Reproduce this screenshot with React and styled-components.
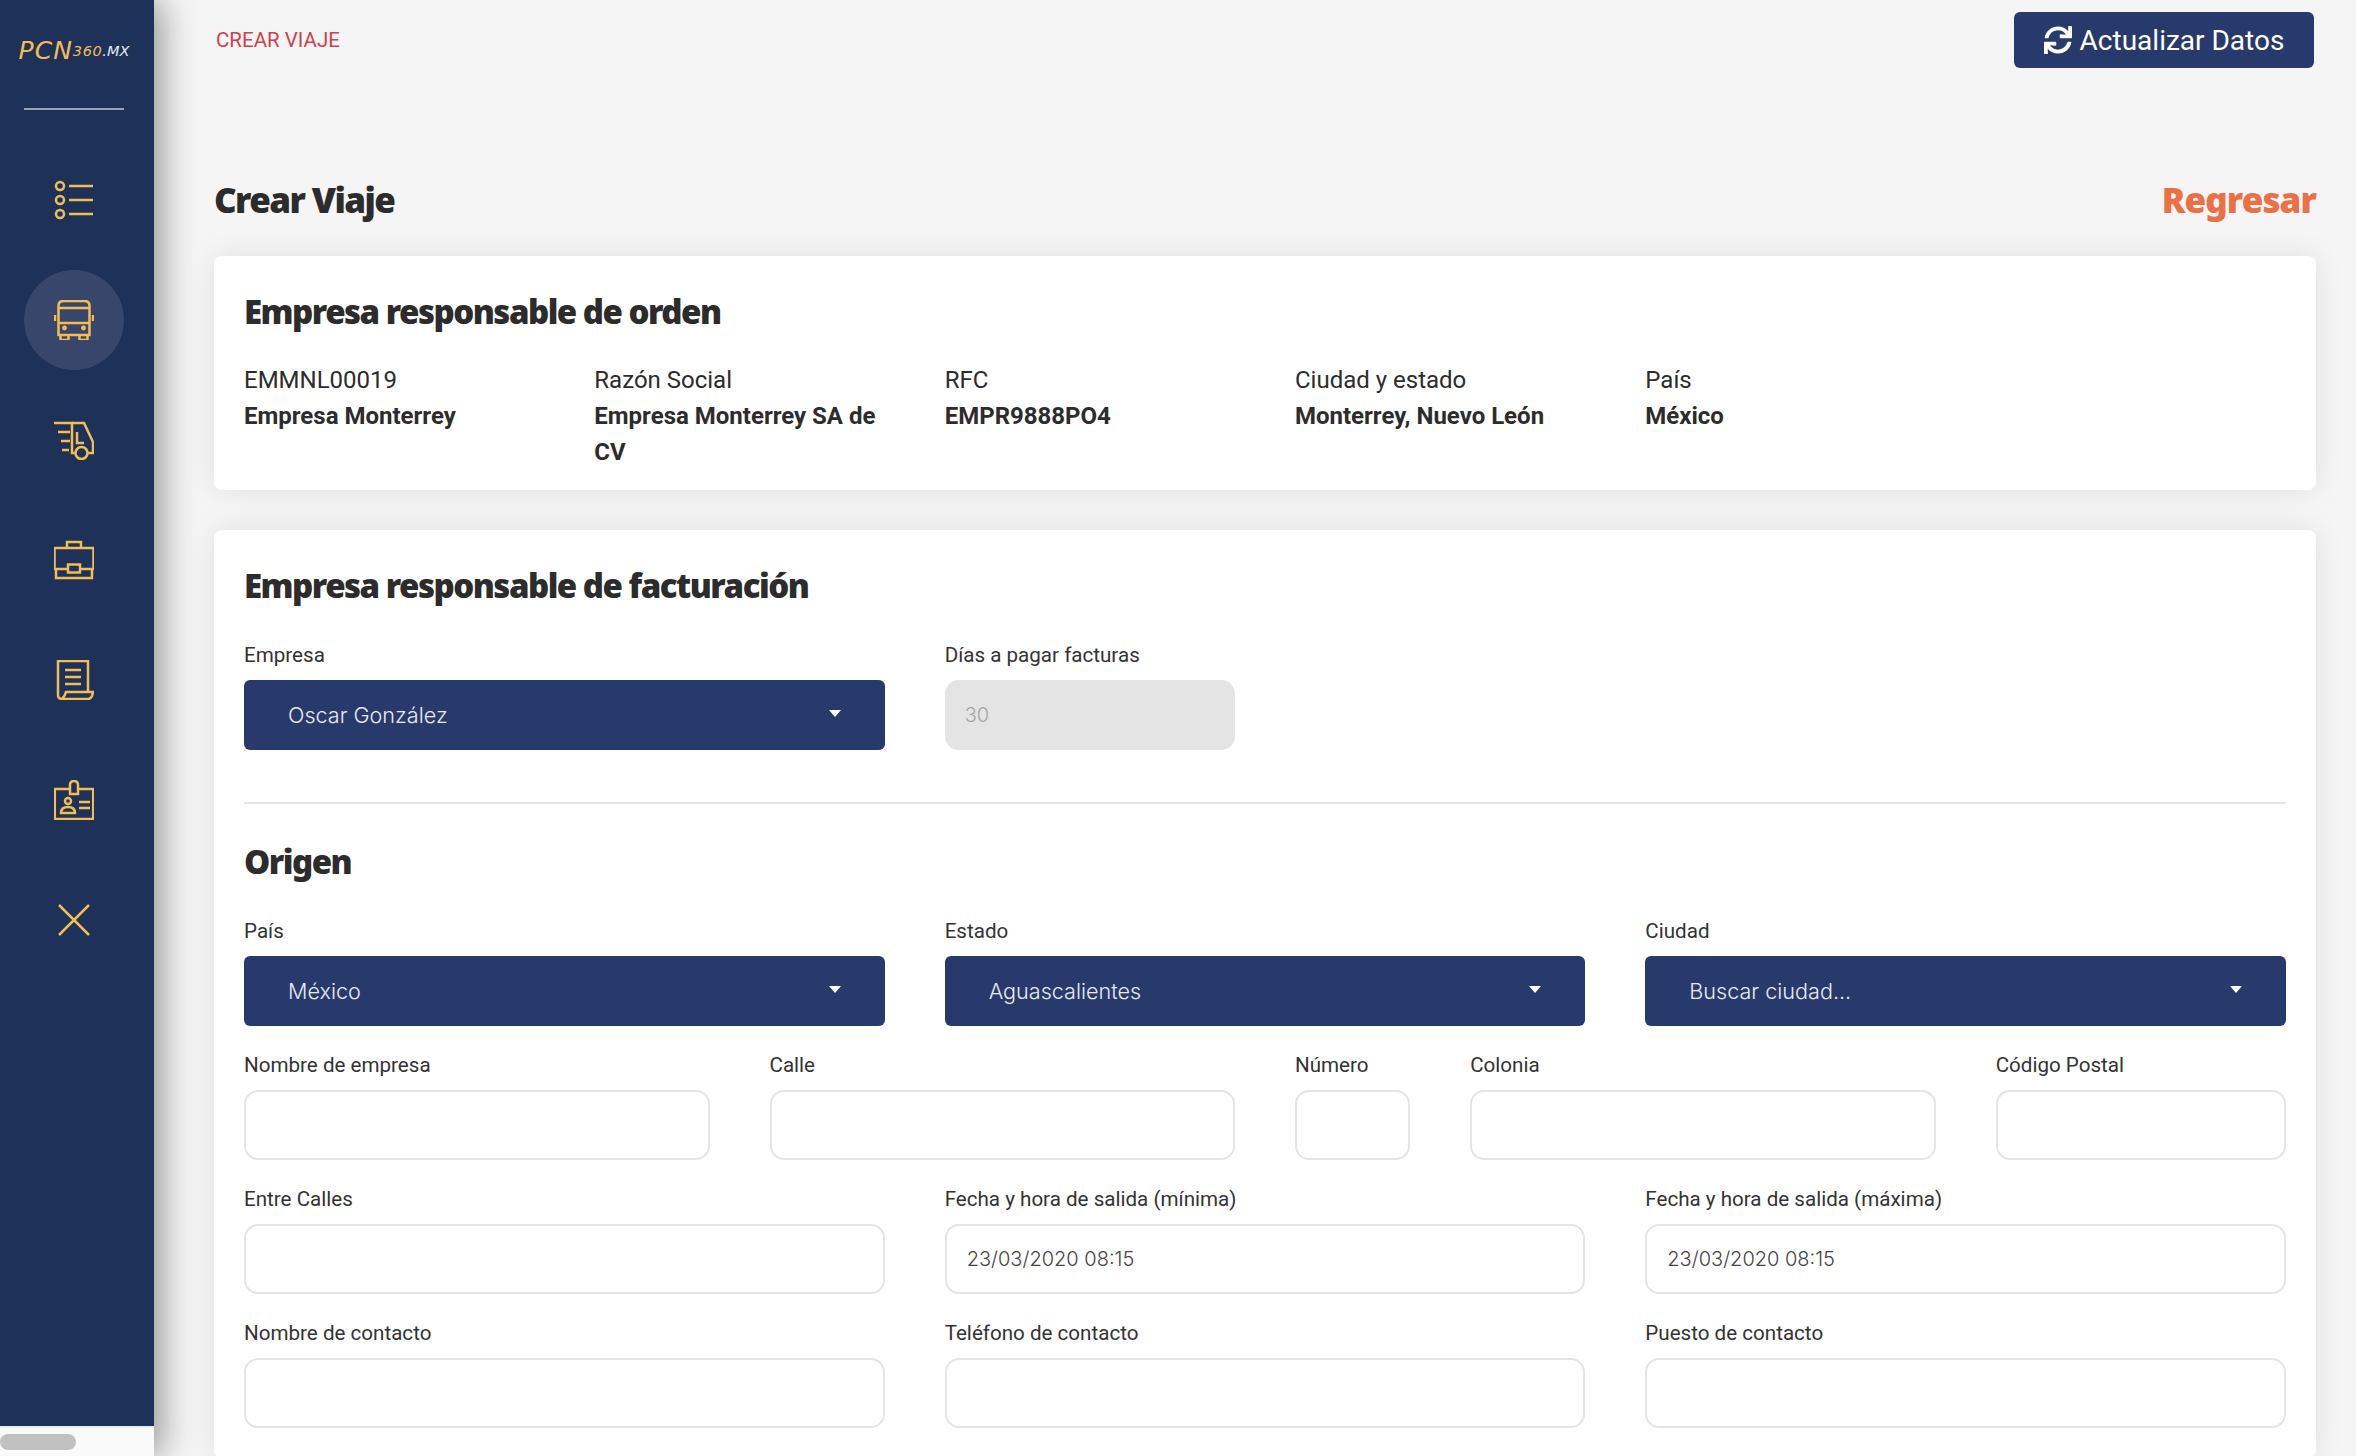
import React from "react"
import styled, { createGlobalStyle } from "styled-components"
import { FaSync } from "react-icons/fa"

const GlobalStyle = createGlobalStyle`
  html, body {
    margin: 0;
    padding: 0;
    background: #f5f5f5;
  }
  * {
    box-sizing: border-box;
  }
`

const Page = styled.div`
  display: flex;
  width: 2356px;
  height: 1456px;
  overflow: hidden;
  font-family: Roboto, "Liberation Sans", sans-serif;
  color: #2c2c2c;
`

const Sidebar = styled.aside`
  position: relative;
  z-index: 1;
  flex: 0 0 154px;
  display: flex;
  flex-direction: column;
  background: #fafafa;
  box-shadow: 6px 0 34px rgba(0, 0, 0, 0.42);
`

const SideBody = styled.div`
  flex: 1;
  padding-right: 6px;
  background: #1e3159;
  display: flex;
  flex-direction: column;
  align-items: center;
`

const Logo = styled.div`
  height: 108px;
  width: 100%;
  padding-top: 36px;
  text-align: center;
  white-space: nowrap;
  font-family: "DejaVu Sans", sans-serif;
  font-style: italic;
  color: #f2bd55;
  span {
    vertical-align: 3px;
    font-size: 14.500px;
    letter-spacing: 0.6px;
  }
  b {
    font-size: 25px;
    font-weight: 400;
    letter-spacing: 1px;
  }
  span + span {
    letter-spacing: 0;
    color: #e6e9f0;
  }
`

const SideRule = styled.div`
  width: 100px;
  height: 2px;
  background: #9aa3b8;
  flex: none;
`

const Nav = styled.nav`
  margin-top: 30px;
  width: 100%;
  display: flex;
  flex-direction: column;
  align-items: center;
`

const NavItem = styled.a`
  height: 120px;
  width: 100%;
  display: flex;
  align-items: center;
  justify-content: center;
  &::before {
    content: "";
    display: ${(p) => (p.$active ? "block" : "none")};
    position: absolute;
    width: 100px;
    height: 100px;
    border-radius: 50%;
    background: #38466b;
  }
  svg {
    position: relative;
    width: 40px;
    height: 40px;
    fill: none;
    stroke: #f2bd55;
    stroke-width: 2.5;
  }
`

const ScrollTrack = styled.div`
  flex: 0 0 30px;
  padding-top: 6px;
  border-top: 2px solid #eeeeee;
  background: #fafafa;
`

const ScrollThumb = styled.div`
  width: 76px;
  height: 16px;
  border-radius: 8px;
  background: #c1c1c1;
`

const Main = styled.main`
  flex: 1;
  min-width: 0;
  padding: 12px 40px 0 60px;
`

const TopBar = styled.div`
  display: flex;
  justify-content: space-between;
  align-items: center;
  height: 56px;
`

const Crumb = styled.span`
  margin-left: 2px;
  font-size: 20.5px;
  color: #d2404a;
`

const UpdateButton = styled.button`
  margin-right: 2px;
  width: 300px;
  height: 56px;
  border: 0;
  border-radius: 6px;
  background: #283a6c;
  color: #ffffff;
  font-family: inherit;
  font-size: 28px;
  display: flex;
  align-items: center;
  justify-content: center;
  gap: 8px;
  svg {
    font-size: 28px;
  }
`

const TitleRow = styled.div`
  display: flex;
  justify-content: space-between;
  align-items: center;
  height: 50px;
  margin: 106px 0 32px;
`

const PageTitle = styled.h1`
  margin: 0;
  font-family: "Noto Sans", sans-serif;
  font-size: 35px;
  font-weight: 900;
  letter-spacing: -1.6px;
  color: #2c2c2c;
`

const BackLink = styled.a`
  font-family: "Noto Sans", sans-serif;
  font-size: 35px;
  font-weight: 900;
  letter-spacing: -0.9px;
  color: #ea7045;
`

const Card = styled.section`
  background: #ffffff;
  border-radius: 8px;
  padding: 30px 30px ${(p) => p.$bottom || 30}px;
  margin-bottom: 40px;
  box-shadow: 0 0 30px rgba(0, 0, 0, 0.09);
`

const CardTitle = styled.h2`
  margin: -1px 0 ${(p) => (p.$bottom || 0) + 1}px;
  font-family: "Noto Sans", sans-serif;
  font-size: 33px;
  line-height: 54px;
  font-weight: 900;
  letter-spacing: -1.5px;
  color: #2c2c2c;
`

const Grid = styled.div`
  display: grid;
  grid-template-columns: repeat(12, 1fr);
  column-gap: 60px;
  row-gap: 26px;
`

const InfoCol = styled.div`
  grid-column: span 2;
  font-size: 24px;
  line-height: 36px;
  b {
    display: block;
    font-weight: 700;
  }
`

const Field = styled.div`
  grid-column: span ${(p) => p.$span};
`

const Label = styled.label`
  display: block;
  height: 26px;
  margin-bottom: 12px;
  font-size: 20.6px;
  line-height: 26px;
  color: #333333;
`

const Select = styled.div`
  position: relative;
  height: 70px;
  padding-left: 44px;
  border-radius: 6px;
  background: #283a6c;
  color: #e8eaf0;
  font-family: Inter, sans-serif;
  font-size: 21.600px;
  font-weight: 300;
  line-height: 70px;
  &::after {
    content: "";
    position: absolute;
    right: 44px;
    top: 30px;
    border-left: 6px solid transparent;
    border-right: 6px solid transparent;
    border-top: 7px solid #ffffff;
  }
`

const Input = styled.input`
  display: block;
  width: 100%;
  height: 70px;
  padding: 0 20px;
  border: 2px solid #e5e5e5;
  border-radius: 14px;
  background: #ffffff;
  color: #444444;
  font-family: Inter, sans-serif;
  font-size: 20px;
  font-weight: 300;
  &:disabled {
    border: 0;
    background: #e4e4e4;
    color: #a5a5a5;
  }
`

const Divider = styled.hr`
  height: 2px;
  margin: 52px 0 32px;
  border: 0;
  background: #e5e5e5;
`

const icons = [
  <svg viewBox="0 0 40 40" key="list">
    <circle cx="6" cy="6" r="4" />
    <circle cx="6" cy="20" r="4" />
    <circle cx="6" cy="34" r="4" />
    <path d="M15 6h24M15 20h24M15 34h24" />
  </svg>,
  <svg viewBox="0 0 40 40" key="bus">
    <path d="M4.500 35V6q0-5 5-5h21q5 0 5 5v29zM4.500 8h31M4.500 23h31" />
    <path d="M6.500 35v5h8v-5M25.500 35v5h8v-5M1 15v6M39 15v6" />
    <circle cx="10.500" cy="28" r="1.200" />
    <circle cx="29.500" cy="28" r="1.200" />
  </svg>,
  <svg viewBox="0 0 40 40" key="truck">
    <path d="M0 3h19M4 12h12M7 21h9M8 30h7" />
    <path d="M18 3v30h3M18 3h12l9 19v11h-5" />
    <path d="M23 12v11h7" />
    <circle cx="27.500" cy="33" r="6" />
  </svg>,
  <svg viewBox="0 0 40 40" key="briefcase">
    <path d="M13 8V2h14v6M.5 8h39v21H.5z" />
    <rect x="14" y="24.500" width="12" height="8" fill="#1e3159" />
    <path d="M2 30v8h36v-8" />
  </svg>,
  <svg viewBox="0 0 40 40" key="scroll">
    <path d="M34 32V1H4v34q0 4 4 4h26q4 0 5-7H12q-1 4-4 7" />
    <path d="M11 10h16M11 17h16M11 24h16" />
  </svg>,
  <svg viewBox="0 0 40 40" key="badge">
    <path d="M16 9H.8v30h38.400V9H24" />
    <path d="M16 14V5q0-4 4-4t4 4v9z" />
    <circle cx="14" cy="21" r="3" />
    <path d="M7 33q0-6 7-6t7 6zM25 22h11M25 28h11" />
  </svg>,
  <svg viewBox="0 0 40 40" key="close">
    <path d="M5 5l30 30M35 5L5 35" />
  </svg>,
]

const InfoBlock = ({ label, value }) => (
  <InfoCol>
    {label}
    <b>{value}</b>
  </InfoCol>
)

const SelectField = ({ span, label, value }) => (
  <Field $span={span}>
    <Label>{label}</Label>
    <Select>{value}</Select>
  </Field>
)

const InputField = ({ span, label, value, disabled }) => (
  <Field $span={span}>
    <Label>{label}</Label>
    <Input defaultValue={value} disabled={disabled} />
  </Field>
)

const App = () => (
  <Page>
    <GlobalStyle />
    <Sidebar>
      <SideBody>
        <Logo>
          <b>PCN</b>
          <span>360</span>
          <span>.MX</span>
        </Logo>
        <SideRule />
        <Nav>
          {icons.map((icon, i) => (
            <NavItem key={i} $active={i === 1}>
              {icon}
            </NavItem>
          ))}
        </Nav>
      </SideBody>
      <ScrollTrack>
        <ScrollThumb />
      </ScrollTrack>
    </Sidebar>
    <Main>
      <TopBar>
        <Crumb>CREAR VIAJE</Crumb>
        <UpdateButton>
          <FaSync />
          Actualizar Datos
        </UpdateButton>
      </TopBar>
      <TitleRow>
        <PageTitle>Crear Viaje</PageTitle>
        <BackLink>Regresar</BackLink>
      </TitleRow>
      <Card $bottom={20}>
        <CardTitle $bottom={22}>Empresa responsable de orden</CardTitle>
        <Grid>
          <InfoBlock label="EMMNL00019" value="Empresa Monterrey" />
          <InfoBlock label="Razón Social" value="Empresa Monterrey SA de CV" />
          <InfoBlock label="RFC" value="EMPR9888PO4" />
          <InfoBlock label="Ciudad y estado" value="Monterrey, Nuevo León" />
          <InfoBlock label="País" value="México" />
        </Grid>
      </Card>
      <Card>
        <CardTitle $bottom={28}>Empresa responsable de facturación</CardTitle>
        <Grid>
          <SelectField span={4} label="Empresa" value="Oscar González" />
          <InputField span={2} label="Días a pagar facturas" value="30" disabled />
        </Grid>
        <Divider />
        <CardTitle $bottom={28}>Origen</CardTitle>
        <Grid>
          <SelectField span={4} label="País" value="México" />
          <SelectField span={4} label="Estado" value="Aguascalientes" />
          <SelectField span={4} label="Ciudad" value="Buscar ciudad..." />
          <InputField span={3} label="Nombre de empresa" />
          <InputField span={3} label="Calle" />
          <InputField span={1} label="Número" />
          <InputField span={3} label="Colonia" />
          <InputField span={2} label="Código Postal" />
          <InputField span={4} label="Entre Calles" />
          <InputField span={4} label="Fecha y hora de salida (mínima)" value="23/03/2020 08:15" />
          <InputField span={4} label="Fecha y hora de salida (máxima)" value="23/03/2020 08:15" />
          <InputField span={4} label="Nombre de contacto" />
          <InputField span={4} label="Teléfono de contacto" />
          <InputField span={4} label="Puesto de contacto" />
        </Grid>
      </Card>
    </Main>
  </Page>
)

export default App
